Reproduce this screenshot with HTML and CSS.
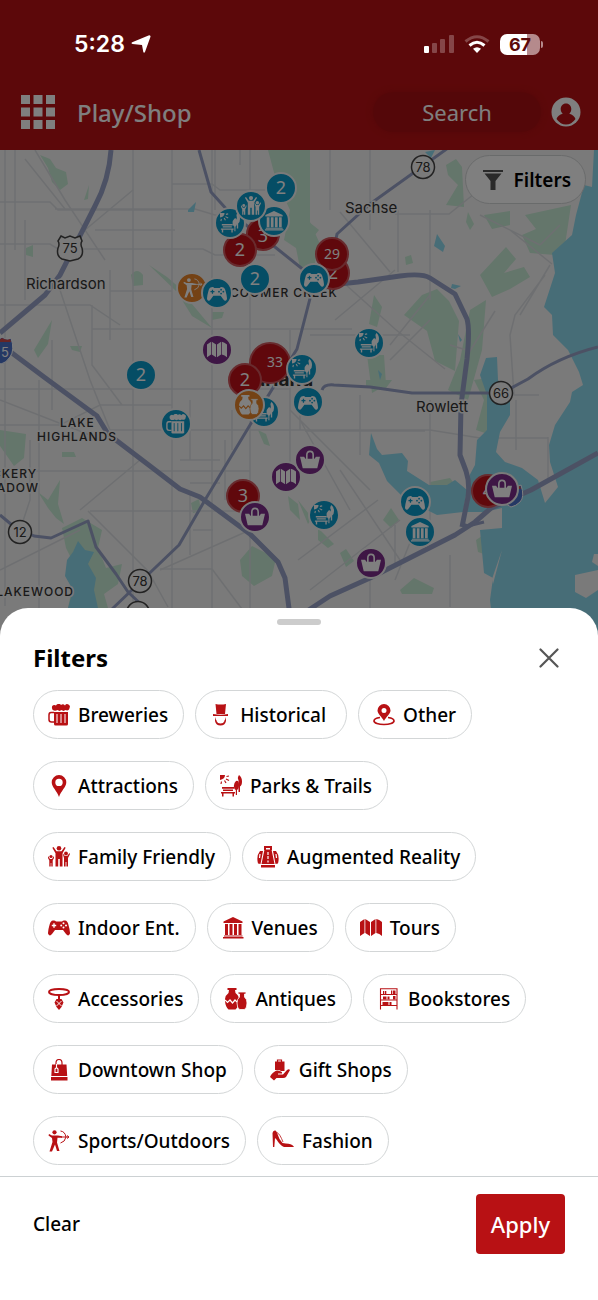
FILE: index.html
```
<!doctype html>
<html lang="en">
	<head>
		<meta charset="utf-8" />
		<meta name="viewport" content="width=device-width, initial-scale=1.0" />
		<title>Play/Shop</title>
		<link rel="stylesheet" href="styles.css">
	</head>
	<body>
		<!-- icon set, --hole is the colour behind the icon -->
		<svg class="defs" width="0" height="0" aria-hidden="true">
			<symbol id="i-beer" viewBox="0 0 22 22">
				<path d="M4 4a2.500 2.500 0 0 1 4-2.500 3 3 0 0 1 5-.5 3 3 0 0 1 4 .5 2.500 2.500 0 0 1 4.500 2.500c0 2-2 3-4 2l-2 1-2-1-2 1-2-1C7 7.500 4 6.500 4 4z" />
				<path d="M6 8h14v12q0 1.500-1.500 1.500h-11Q6 21.500 6 20z" />
				<path d="M6 8.500H3Q1 8.500 1 11v4.500Q1 18 3.500 18H6" fill="none" stroke="currentColor" stroke-width="1.500" />
				<path d="M9 10v9M13 10v9M17 10v9" stroke="var(--hole)" stroke-width="1" />
			</symbol>
			<symbol id="i-hat" viewBox="0 0 22 22">
				<path d="M5.500 0q5 1 10.500 0L15 10H6.500z" />
				<path d="M3 10q8 1.500 15 0v2H3z" />
				<path d="M5 13l1 3q1.500-.5 4.500-.5t4.500.5l1-3v4q-1 4.500-5.500 4.500T5 17z" />
				<path d="M6.500 13h8v4q-1 2.500-4 2.500t-4-2.500z" fill="var(--hole)" />
			</symbol>
			<symbol id="i-other" viewBox="0 0 22 22">
				<path fill-rule="evenodd" d="M11 0a6.500 6.500 0 0 1 6.500 6.500C17.500 10 13 13 11 17 9 13 4.500 10 4.500 6.500A6.500 6.500 0 0 1 11 0zm0 4a2.500 2.500 0 1 0 0 5A2.500 2.500 0 0 0 11 4z" />
				<path d="M7 13.500C3 14 1 15.500 1 17c0 2 4.500 3.500 10 3.500S21 19 21 17c0-1.500-2-3-6-3.500" fill="none" stroke="currentColor" stroke-width="1.700" />
			</symbol>
			<symbol id="i-pin" viewBox="0 0 22 22">
				<path fill-rule="evenodd" d="M11 0a7.300 7.300 0 0 1 7.300 7.300C18.300 12 13 16 11 22 9 16 3.700 12 3.700 7.300A7.300 7.300 0 0 1 11 0zm0 3.700a3.700 3.700 0 1 0 0 7.400A3.700 3.700 0 0 0 11 3.700z" />
			</symbol>
			<symbol id="i-park" viewBox="0 0 22 22">
				<path d="M0 0h5q0 4-5 5z" />
				<path d="M6.500 1.500L9 1M6 4l3 1.500M4.500 5.500L6 8M1.500 6.500L1 9" stroke="currentColor" stroke-width="1.200" />
				<path d="M2 12h12v1.800H2zM3 14.500h10V16H3zM1 17h14v1.500H1zM2 18h1.500v3.500H2zM12.500 18H14v3.500h-1.500z" />
				<path d="M16 6q3-1 3 4 0 4-2 5v5h-1.200v-5q-2-1-2-4t2.200-5z" />
				<path d="M19 0q3 2 3 6.500 0 4-2 5V17h-1.500V5Q17 3 19 0z" />
			</symbol>
			<symbol id="i-family" viewBox="0 0 22 22">
				<circle cx="11" cy="2.300" r="2.300" />
				<path d="M5.500 1l3 4.200h5L16.500 1l1.200.8-3.200 5.500V20.500h-2.700V13h-1.600v7.500H7.500V7.300L4.300 1.800z" />
				<circle cx="3" cy="10.500" r="1.600" />
				<path d="M0 10l2 3h2l2-3v2l-1.300 2.500v6H3.300V17h-.6v3.500H1.300v-6L0 12z" />
				<circle cx="18" cy="7.500" r="1.900" />
				<path d="M14.500 7l2.300 3h2.400L21.500 7l.5 1-2 4v8.500h-1.600V16h-.8v4.500H16V12z" />
			</symbol>
			<symbol id="i-case" viewBox="0 0 22 22">
				<path d="M8 4V1h6v3" fill="none" stroke="currentColor" stroke-width="2" />
				<path d="M7.500 3.500h7L17.500 18h-13zM3 5h3L3.500 18 1 17.500Q-1 10 3 5zM19 5h-3l2.500 13 2.500-.5Q23 10 19 5zM4 19h14v2.500H4z" />
				<path d="M3 8l-.5 4M19 8l.5 4M11 6v3M11 10v3M11 14.500v2" stroke="var(--hole)" stroke-width="1.200" />
			</symbol>
			<symbol id="i-game" viewBox="0 0 22 22">
				<path d="M5 3.500q2-.5 3 1h6q1-1.500 3-1 2.500 0 3.500 4.500 2 7 1.300 9-1.500 3-4-.2L15 13H7l-2.800 3.800q-2.500 3.200-4 .2Q-.5 15 1.500 8 2.500 3.500 5 3.500z" />
				<path d="M3.800 8.500h4.400M6 6.300v4.400" stroke="var(--hole)" stroke-width="1.400" />
				<g fill="var(--hole)"><circle cx="15.500" cy="6.200" r="1" /><circle cx="15.500" cy="10.500" r="1" /><circle cx="18" cy="8.400" r="1" /><circle cx="13.200" cy="8.400" r="1" /></g>
			</symbol>
			<symbol id="i-venue" viewBox="0 0 22 22">
				<path d="M11 0l9.500 4.500V6h-19V4.500zM3 7h3v11H3zM7.500 7h3v11h-3zM12 7h3v11h-3zM16.500 7h3v11h-3zM2 18.500h18.500v1H2zM1 20h20.500v1.500H1z" />
			</symbol>
			<symbol id="i-map" viewBox="0 0 22 22">
				<path d="M0 5l4.500-3v14L0 19zM5.300 2L10 5v14l-4.700-3zM11 5l4.500-3v14L11 19zM16.300 2q3 .5 5.700 3v14q-2.500-2.500-5.700-3z" />
			</symbol>
			<symbol id="i-necklace" viewBox="0 0 22 22">
				<ellipse cx="11" cy="4" rx="10" ry="3" fill="none" stroke="currentColor" stroke-width="2" />
				<path d="M10 6h2v5h-2z" />
				<path d="M8.500 11h5l2 3.500-2 4.500-2.500 3L8.500 19l-2-4.500z" />
				<path d="M8.500 13l5 5M13.500 13l-5 5" stroke="var(--hole)" stroke-width=".9" />
			</symbol>
			<symbol id="i-vase" viewBox="0 0 22 22">
				<path d="M2.500 0h9v2H10l.5 3q4 3 3.500 8-.5 6-3.500 8.500h-7Q.5 19 0 13q-.5-5 3.500-8L4 2H2.500z" />
				<path d="M13 4h8v2h-1.500v3q2.500 2 2.500 6 0 5-2.500 6.500h-5Q12 20 12 15q0-4 2.500-6V6H13z" stroke="var(--hole)" stroke-width=".8" />
				<path d="M0 12l2.500 2.500L5 12l2.500 3 2.500-3 2 2" fill="none" stroke="var(--hole)" stroke-width="1.200" />
			</symbol>
			<symbol id="i-shelf" viewBox="0 0 22 22">
				<path d="M2.500 21.500V.7h16.500v20.800M2.500 6.500H19M2.500 12H19M2.500 17.500H19" fill="none" stroke="currentColor" stroke-width="1.100" />
				<path d="M5 3h1.300v3H5zM7 3h1.300v3H7zM13 2.500h1.300V6H13zM15 2.500h2.500V6H15zM5 8.500h3.500v3H5zM9.500 8.500h2v3h-2zM15 8h2.500v3.500H15zM4.500 14h6v3h-6zM11.500 14h2v3h-2z" />
			</symbol>
			<symbol id="i-shopbag" viewBox="0 0 22 22">
				<path d="M8 8V4q0-3.500 3-3.500T14 4v4" fill="none" stroke="currentColor" stroke-width="1.200" />
				<path d="M4 5.500h14.500l.7 11.500H3.300zM3 18h16.500v3.500H3z" />
				<path d="M8.500 5v4M7 10l1.500-1.500L10 10v3.500H7z" fill="none" stroke="var(--hole)" stroke-width="1.100" />
			</symbol>
			<symbol id="i-gift" viewBox="0 0 22 22">
				<path d="M8.500 4V1h4v3" fill="none" stroke="currentColor" stroke-width="1.200" />
				<path d="M6 2.500h9.500V12H12l-2-1H6z" />
				<path d="M2 16q4-5 7-4.500l3 1q1.500.5 1 2H9v1h5l4-4.500q2-1.500 3 0L17 18q-1 1-3 1H7.500L5 21.500 1 18z" />
			</symbol>
			<symbol id="i-archer" viewBox="0 0 22 22">
				<circle cx="6.500" cy="2.300" r="2.100" />
				<path d="M1 4l3 1.500h6l4 .8v1.500H9.500l-.5 4.700L11.500 21H9L7 14.500 4 21.500H1.500L4.500 12 4 8 .5 5.500z" />
				<path d="M12.500 1q4.500.5 5.500 6-1 5-5.500 6M13 7h8M19 5.500L21 7l-2 1.500" fill="none" stroke="currentColor" stroke-width="1" />
			</symbol>
			<symbol id="i-shoe" viewBox="0 0 22 22">
				<path d="M.5 3Q1 0 3.500.5q1.500 1 2 3.500 1.500 5.500 5 9 3.500.5 6 .7 4.500.8 5.500 3.300H12q-4-1.500-7.500-7.500L3 8l-.7 9H1z" />
				<path d="M5 2.500q3 1.500 6 9.500" fill="none" stroke="currentColor" stroke-width=".8" />
			</symbol>
			<symbol id="i-basket" viewBox="0 0 22 22">
				<path d="M0 7.500h4.500L6 9.500h10l1.500-2H22L19 20H3z" />
				<path d="M7.500 10V5.500q0-4 3.500-4t3.500 4V10" fill="none" stroke="currentColor" stroke-width="1.800" />
			</symbol>
		</svg>

		<div class="screen">
			<div class="status">
				<div class="status-time">
					5:28
					<svg width="20" height="18" viewBox="0 0 20 18"><path d="M19 .5q.8.500.4 1.500L14 17q-1 1.500-1.700 0L11 10 1.500 9q-2-.8-.3-1.800L17.500.5q1-.4 1.500 0z" /></svg>
				</div>
				<div class="status-icons">
					<svg width="30" height="18" viewBox="0 0 30 18">
						<rect y="11" width="5" height="7" rx="1" />
						<g opacity=".25"><rect x="8" y="8" width="5" height="10" rx="1" /><rect x="16" y="4" width="5" height="14" rx="1" /><rect x="25" y="0" width="5" height="18" rx="1" /></g>
					</svg>
					<svg width="26" height="18" viewBox="0 0 26 18">
						<path d="M1.500 6.500q11.500-9.500 23 0" fill="none" stroke="#fff" stroke-width="3" opacity=".25" />
						<path d="M5.500 10.500q7.500-6.500 15 0" fill="none" stroke="#fff" stroke-width="3" />
						<path d="M9 13.800q4-3 8 0l-4 4.200z" />
					</svg>
					<span class="battery">67</span>
				</div>
			</div>

			<header class="toolbar">
				<button class="icon-btn" aria-label="Menu">
					<svg width="34" height="34" viewBox="0 0 34 34"><path d="M0 0h9v9H0zM12.500 0h9v9h-9zM25 0h9v9h-9zM0 12.500h9v9H0zM12.500 12.500h9v9h-9zM25 12.500h9v9h-9zM0 25h9v9H0zM12.500 25h9v9h-9zM25 25h9v9h-9z" /></svg>
				</button>
				<h1>Play/Shop</h1>
				<input class="search" type="text" placeholder="Search" aria-label="Search">
				<button class="icon-btn" aria-label="Account">
					<svg width="30" height="30" viewBox="0 0 30 30"><circle cx="15" cy="15" r="14.500" /><path d="M15 6.500c3.300 0 5.300 2.500 5.300 5.500 0 2-.8 3.700-2 4.700 3 1 5.500 2.500 6.200 5.300Q20.500 27.500 15 27.500T5.500 22c.7-2.800 3.200-4.300 6.200-5.300-1.200-1-2-2.700-2-4.700 0-3 2-5.500 5.300-5.500z" fill="#b81114" /></svg>
				</button>
			</header>

			<main class="map">
				<svg class="map-canvas" viewBox="0 150 598 486" preserveAspectRatio="xMidYMin slice">
					<g class="green">
						<path d="M40 155l10 4 6 9 10 4 2 12-8 6-8-8-4-14z" />
						<path d="M84 200l5-15-1 14zM268 150h42v72l10 22-8 30-12-6-4-20-12-8 6-30-14-30z" />
						<path d="M131 275q6-8 12 0v10l-10 1zM149 265l18 12 14 12-5 2zM182 300l10 4 20 24-20-12zM212 312h12l-2 6-10 2z" />
						<path d="M26 248l7-3v12l-7-2zM52 320l-18 30 4 8 10-14zM70 346l12 0-2 6-8-2z" />
						<path d="M446 165l10-6 6 8 2 40-18-2 12-20-10-10zM468 212l6 12-4 6-4-8z" />
						<path d="M484 215l26-4 0 14-18 4zM525 215l46-10-6 40-10 10-25-2-8-18 14-6z" />
						<path d="M480 275l26-28 10 12-12 14 20-6 6 10-20 12-18 8zM404 315l18-20 15-6 12 12 10 20-4 50-20-10-8-30z" />
						<path d="M374 295l8 12-5 20-8-3zM367 355h17l2 30-14 8zM470 310l16-10-4 50-14 50-20-10 12-30zM488 378l12 20-6 38-18-6 8-30-10-20z" />
						<path d="M0 430l26 4-2 24-10 8-14-20zM62 452l12 0 2 5-14 0zM38 492l10 8 12-20-2 24 6 20-8-6-8-10z" />
						<path d="M62 528l20-10 20 12-4 18 8 20 16-4-4 20-14 10 4 14H68l8-40-10-20z" />
						<path d="M240 560l12-14 24 12-4 18-18 10-12-10zM191 503l8-4 2 12-8 2zM258 430l8 4 4 12-6-2zM288 496l10 8 2 16-10-10z" />
						<path d="M383 520l8-12 8 12-8 8zM340 553l6-4 8 12-8 6zM400 590l14-12 20 10-2 6-30 0zM318 528l16 16-6 4-10-8zM298 500l14 18-4 6z" />
						<path d="M476 540l6-4 2 18-6-2zM366 380h26l-6 8-20-2zM319 230l-10-8v20zM405 257l6-2 2 8-7 2z" />
						<path d="M430 482l20-4 6 8-16 8-10-4z" />
					</g>
					<g class="minor">
						<path d="M5 150v456M39 380v228M52 340v70M133 150v458M172 150v458M212 150v458M250 150v458M290 330v140M330 150v60M370 150v80M398 210v62M430 210v90M430 400v130M516 400v50M548 437v45M450 555v52M370 580v28M395 525v40" />
						<path d="M0 202h50l8 8h114M55 209h140l20 6h70M0 244h50l8 5h145l12 6h60M95 230h80M172 184h40l8 6h60M92 329h260M110 291h62M0 389h290M0 425h60l40-20h72M110 430h320l50 8h68M0 471h250M90 511h160M160 569h52M0 305h90l30 20M305 431h120M310 335h100M395 214h54l40-32M92 305v60l30 40M212 569l30 40" />
						<path d="M35 150l30 50 40 60M65 209l-40-50M133 190l-60 50M60 290l30 90 20 50M250 530l-90 40M0 570l80-40M88 511l60 60 20 36M140 460l-60 50M340 212l50 60M345 284l50 45 50 40M395 270l-60 50M430 295l-40 50M510 230l42 34M560 225l-20 20M520 315l30-50M430 320l-40 40M545 275l-30 40-5 20 4 60 25 0M540 245l-60-30M450 345l20 6 25-40M290 410l80 80M300 420l50 90M340 470l40 60 20 30M298 560l80-60M310 590l90-70M415 530l-20 50M190 495v60M225 440v60M232 410v40M190 400v60" />
						<path d="M180 460h40M190 483h30M193 530h20M215 150v60M240 165v-15M15 150v100M25 220v80M110 270v70M0 400l90 35M30 440v60l-10 30M300 390v40M360 395v60" />
					</g>
					<g class="water">
						<path d="M598 150L594 150 592 187 584 185 576 215 572 235 552 253 555 273 544 307 552 315 553 335 568 350 579 372 583 385 572 392 570 402 555 425 549 445 550 462 558 487 545 503 538 480 522 468 505 462 496 452 500 432 510 415 510 398 498 380 497 357 486 358 480 375 487 395 487 430 477 440 475 465 467 480 466 512 485 512 502 508 502 528 480 530 484 573 493 578 490 600 494 636 598 636z" />
						<path d="M371 433l6 16 5 6 20-2 6 8-1 10 22 14 18 0 8-5 12 10-4 22-26 3-12-6-12-8-12-6-14-14-8-18-10-8z" />
						<path d="M78 541l7 9 9 2-6 12 8 14-2 12 4 18H68l5-18-8-14 2-16 6-8z" />
						<path d="M437 234l8 12-2 6-9-6zM188 210l8-8-2 10-6 0zM452 284l9 2-6 3-4-1zM458 334l4 6-2 2zM425 152l10-2-4 8zM378 370l4 4-2 6zM299 276l6 4-3 4z" />
					</g>
					<!-- land between the lake arms -->
					<path class="land" d="M594 554l4 0v12l-6-4zM575 575l23-5v20l-12 8-11-6zM502 550l-9 34-1-5z" />
					<g class="road">
						<path d="M111 150q-2 30-16 56L60 275 45 295 0 333" />
						<path d="M0 346l12 7 32 24 53 39 11 18 42 32 30 23 20 8 50 37 28 28 7 16 5 38" />
						<path d="M330 285l28-3 42-6q22-3 30 2l25 16 12 25q3 10 0 40l-6 46-1 50 6 16q4 12 2 26l-6 30" />
						<path d="M298 617l32-21 40-18 85-43 20-13 16-14 40-18 67-37" />
					</g>
					<g class="road road-thin">
						<path d="M199 150l12 42 18 20 46 35 40 32-18 70-47 76-45 75-26 45-68 65" />
						<path d="M448 148l-78 56-33 30-8 40" />
						<path d="M322 390q2-6 12-5l36 2 42 6h90l26-14q30-22 70-32" />
						<path d="M0 515l12 10 22 11 17 2 37-17 8 26 20 27 12 18 18 17M462 524l6 2 16-4" />
					</g>
					<g class="label">
						<text x="26" y="289">Richardson</text>
						<text x="345" y="213">Sachse</text>
						<text x="416" y="412">Rowlett</text>
					</g>
					<text class="label label-city" x="240" y="386">Garland</text>
					<g class="label label-area">
						<text x="230" y="297">COOMER CREEK</text>
						<text x="60" y="427">LAKE</text>
						<text x="37" y="441">HIGHLANDS</text>
						<text x="37" y="478" text-anchor="end">VICKERY</text>
						<text x="39" y="492" text-anchor="end">MEADOW</text>
						<text x="74" y="596" text-anchor="end">LAKEWOOD</text>
					</g>
					<g class="shield">
						<path d="M61 236l4 2 5-2 5 2 5-2 2 5q-2 3 0 7 2 8-4 11l-8 2-8-2q-6-3-4-11 2-4 0-7z" />
						<circle cx="423" cy="167" r="11.500" />
						<circle cx="501" cy="393" r="11.500" />
						<circle cx="20" cy="532" r="11.500" />
						<circle cx="140" cy="581" r="11.500" />
						<circle cx="138" cy="613" r="11.500" />
						<text x="70" y="253">75</text>
						<text x="423" y="172">78</text>
						<text x="501" y="398">66</text>
						<text x="20" y="537">12</text>
						<text x="140" y="586">78</text>
					</g>
					<g class="interstate">
						<path d="M-8 338q6 3 10-1 5 4 9 1 4 12-1 19-4 6-9 7-6-2-10-8z" />
						<path class="interstate-top" d="M-7 339q5 2 9-1 5 3 8 1l1 3H-7z" />
						<text x="1" y="357">5</text>
						<path d="M502 485q6 3 10-1 5 4 9 1 4 12-1 17-4 4-9 5-6-2-9-8z" />
						<path class="interstate-top" d="M504 486q5 2 8-1 5 3 8 1l1 3h-17z" />
					</g>

					<g class="pin cluster">
						<circle cx="263" cy="234" r="16" /><text x="263" y="242">3</text>
						<circle cx="240" cy="250" r="16" /><text x="240" y="256">2</text>
						<circle cx="333" cy="273" r="16" /><text x="333" y="279">2</text>
						<circle cx="332" cy="254" r="16" /><text class="small" x="332" y="259">29</text>
						<circle cx="270" cy="363" r="20" /><text class="small" x="275" y="367">33</text>
						<circle cx="245" cy="380" r="16" /><text x="245" y="386">2</text>
						<circle cx="243" cy="496" r="16" /><text x="243" y="502">3</text>
						<circle cx="488" cy="491" r="16" /><text x="488" y="497">4</text>
					</g>
					<g class="pin blue">
						<circle cx="281" cy="188" r="15" /><text x="281" y="194">2</text>
						<circle cx="255" cy="279" r="15" /><text x="255" y="285">2</text>
						<circle cx="141" cy="375" r="15" /><text x="141" y="381">2</text>
						<circle cx="230" cy="223" r="15" /><use href="#i-park" x="220" y="213" width="20" height="20" />
						<circle cx="274" cy="221" r="15" /><use href="#i-venue" x="264" y="211" width="20" height="20" />
						<circle cx="251" cy="206" r="15" /><use href="#i-family" x="241" y="196" width="20" height="20" />
						<circle cx="314" cy="279" r="15" /><use href="#i-game" x="304" y="270" width="20" height="20" />
						<circle cx="369" cy="343" r="15" /><use href="#i-park" x="359" y="333" width="20" height="20" />
						<circle cx="302" cy="369" r="15" /><use href="#i-park" x="292" y="359" width="20" height="20" />
						<circle cx="308" cy="402" r="15" /><use href="#i-game" x="298" y="393" width="20" height="20" />
						<circle cx="264" cy="412" r="15" /><use href="#i-park" x="254" y="402" width="20" height="20" />
						<circle cx="176" cy="424" r="15" /><use href="#i-beer" x="166" y="414" width="20" height="20" />
						<circle cx="324" cy="515" r="15" /><use href="#i-park" x="314" y="505" width="20" height="20" />
						<circle cx="415" cy="502" r="15" /><use href="#i-game" x="405" y="493" width="20" height="20" />
						<circle cx="420" cy="532" r="15" /><use href="#i-venue" x="410" y="522" width="20" height="20" />
					</g>
					<g class="pin orange">
						<circle cx="192" cy="288" r="15" /><use href="#i-archer" x="183" y="278" width="20" height="20" />
						<circle cx="249" cy="405" r="15" /><use href="#i-vase" x="239" y="395" width="20" height="20" />
					</g>
					<g class="pin blue">
						<circle cx="217" cy="293" r="15" /><use href="#i-game" x="207" y="284" width="20" height="20" />
					</g>
					<g class="pin purple">
						<circle cx="217" cy="350" r="15" /><use href="#i-map" x="207" y="340" width="20" height="20" />
						<circle cx="286" cy="477" r="15" /><use href="#i-map" x="276" y="467" width="20" height="20" />
						<circle cx="310" cy="460" r="15" /><use href="#i-basket" x="300" y="450" width="20" height="20" />
						<circle cx="255" cy="517" r="15" /><use href="#i-basket" x="245" y="507" width="20" height="20" />
						<circle cx="371" cy="563" r="15" /><use href="#i-basket" x="361" y="553" width="20" height="20" />
						<circle cx="502" cy="489" r="16" /><use href="#i-basket" x="492" y="479" width="20" height="20" />
					</g>
				</svg>
				<button class="chip map-filters">
					<svg width="20" height="20" viewBox="0 0 20 20"><path d="M0 0h20v2H0zM1.500 3.500h17L12.500 11v9h-5v-9z" /></svg>
					Filters
				</button>
			</main>

			<div class="scrim"></div>

			<section class="sheet">
				<div class="grabber"></div>
				<div class="sheet-head">
					<h2>Filters</h2>
					<button class="icon-btn close" aria-label="Close">
						<svg width="20" height="20" viewBox="0 0 20 20"><path d="M1.500 1.500l17 17M18.500 1.500l-17 17" stroke="#555" stroke-width="2.200" stroke-linecap="round" /></svg>
					</button>
				</div>
				<div class="chips">
					<button class="chip"><svg><use href="#i-beer" /></svg>Breweries</button>
					<button class="chip"><svg><use href="#i-hat" /></svg>Historical&nbsp;</button>
					<button class="chip"><svg><use href="#i-other" /></svg>Other</button>
					<button class="chip"><svg><use href="#i-pin" /></svg>Attractions</button>
					<button class="chip"><svg><use href="#i-park" /></svg>Parks &amp; Trails</button>
					<button class="chip"><svg><use href="#i-family" /></svg>Family Friendly</button>
					<button class="chip"><svg><use href="#i-case" /></svg>Augmented Reality</button>
					<button class="chip"><svg><use href="#i-game" /></svg>Indoor Ent.</button>
					<button class="chip"><svg><use href="#i-venue" /></svg>Venues</button>
					<button class="chip"><svg><use href="#i-map" /></svg>Tours</button>
					<button class="chip"><svg><use href="#i-necklace" /></svg>Accessories</button>
					<button class="chip"><svg><use href="#i-vase" /></svg>Antiques</button>
					<button class="chip"><svg><use href="#i-shelf" /></svg>Bookstores</button>
					<button class="chip"><svg><use href="#i-shopbag" /></svg>Downtown Shop</button>
					<button class="chip"><svg><use href="#i-gift" /></svg>Gift Shops</button>
					<button class="chip"><svg><use href="#i-archer" /></svg>Sports/Outdoors</button>
					<button class="chip"><svg><use href="#i-shoe" /></svg>Fashion</button>
				</div>
				<div class="sheet-foot">
					<button class="clear">Clear</button>
					<button class="apply">Apply</button>
				</div>
			</section>
		</div>
	</body>
</html>
```
FILE: styles.css
```
* { box-sizing: border-box; }
html, body, h1, h2 { margin: 0; padding: 0; }
body { font-family: "Noto Sans", "Open Sans", sans-serif; color: #000; background: #fff; }
button, input { margin: 0; padding: 0; border: 0; background: none; font: inherit; color: inherit; }
button { cursor: pointer; }
svg { display: block; flex: none; fill: currentColor; }
.defs { position: absolute; }

.screen { position: relative; display: flex; flex-direction: column; min-height: 100vh; background: #b81114; }
.scrim { position: absolute; top: 0; right: 0; bottom: 0; left: 0; background: rgba(0, 0, 0, 0.5); }

/* status bar stays above the scrim */
.status { position: relative; z-index: 2; display: flex; justify-content: space-between; align-items: center; height: 76px; padding: 12px 58px 0 74px; color: #fff; font-family: Inter, sans-serif; }
.status-time { display: flex; align-items: center; gap: 6px; font-size: 23px; font-weight: 600; }
.status-icons { display: flex; align-items: center; gap: 10px; }
.battery { position: relative; width: 40px; height: 21px; border-radius: 7px; background: linear-gradient(90deg, #fff 67%, #b58a8c 67%); color: #5c090a; font-size: 18px; font-weight: 700; line-height: 21px; text-align: center; }
.battery::after { content: ""; position: absolute; left: 41px; top: 7px; width: 2px; height: 7px; border-radius: 0 2px 2px 0; background: #b58a8c; }

.toolbar { display: flex; align-items: center; height: 74px; padding: 0 17px 2px 21px; color: #fff; }
.toolbar h1 { flex: 1; margin-left: 22px; font-size: 24px; font-weight: 500; }
.search { width: 168px; height: 40px; margin-right: 10px; border-radius: 20px; background: #a90f12; box-shadow: 0 0 6px #a90f12; font-size: 22px; text-align: center; }
.search::placeholder { color: #fff; opacity: 1; }

.map { position: relative; flex: 1; min-height: 486px; background: #f5f4f4; overflow: hidden; }
.map-canvas { position: absolute; width: 100%; height: 100%; }
.map-filters { position: absolute; top: 5px; right: 12px; }

.green { fill: #c8ecd6; }
.water { fill: #8fdaee; }
.land { fill: #f5f4f4; }
.minor { fill: none; stroke: #dcdfe3; stroke-width: 1.500px; }
.road { fill: none; stroke: #98a3c8; stroke-width: 5px; stroke-linejoin: round; }
.road-thin { stroke-width: 3px; }
.label { fill: #333; stroke: #f5f4f4; stroke-width: 3px; paint-order: stroke; font-family: Inter, sans-serif; font-size: 15px; }
.label-area { font-size: 12px; font-weight: 500; letter-spacing: 1px; }
.label-city { font-size: 19px; font-weight: 700; }
.shield { fill: #f5f4f4; stroke: #444; stroke-width: 1.500px; font-family: Inter, sans-serif; font-size: 13px; text-anchor: middle; }
.shield text { fill: #333; stroke: none; }
.interstate { fill: #4a70c8; stroke: #fff; stroke-width: 1px; font-family: Inter, sans-serif; font-size: 13px; }
.interstate-top { fill: #d04a4a; stroke: none; }
.interstate text { fill: #fff; stroke: none; }

.pin { color: #fff; font-size: 18px; text-anchor: middle; }
.pin circle { fill: var(--hole); stroke: #f5f4f4; stroke-width: 2px; }
.pin text { fill: #fff; }
.pin .small { font-size: 14px; }
.cluster { --hole: #c01018; }
.cluster circle { stroke: #d0565c; }
.blue { --hole: #0a9bcb; }
.orange { --hole: #e8842a; }
.purple { --hole: #7c2c8a; }

.sheet { position: relative; z-index: 2; margin-top: -28px; padding-top: 11px; border-radius: 28px 28px 0 0; background: #fff; }
.grabber { width: 44px; height: 6px; margin: 0 auto; border-radius: 3px; background: #ccc; }
.sheet-head { display: flex; justify-content: space-between; align-items: center; height: 65px; padding: 0 39px 0 33px; }
.sheet-head h2 { font-size: 24px; font-weight: 700; }
.chips { display: flex; flex-wrap: wrap; gap: 22px 11px; padding: 0 33px 11px; }
.chip { --hole: #fff; display: flex; align-items: center; gap: 8px; height: 49px; padding: 0 15px 0 14px; border: 1px solid #d3d6d7; border-radius: 25px; background: #fff; font-size: 19px; font-weight: 500; white-space: nowrap; }
.chip svg { width: 22px; height: 22px; color: #b81114; }
.map-filters { gap: 11px; padding: 0 14px 0 17px; font-weight: 600; }
.map-filters svg { width: 20px; height: 20px; color: #555; }
.sheet-foot { display: flex; justify-content: space-between; align-items: flex-start; height: 124px; padding: 17px 33px; border-top: 1px solid #ccd1d3; }
.clear { height: 60px; font-size: 19px; font-weight: 500; }
.apply { height: 60px; padding: 0 15px; border-radius: 4px; background: #b81114; color: #fff; font-size: 22px; font-weight: 500; }
```
